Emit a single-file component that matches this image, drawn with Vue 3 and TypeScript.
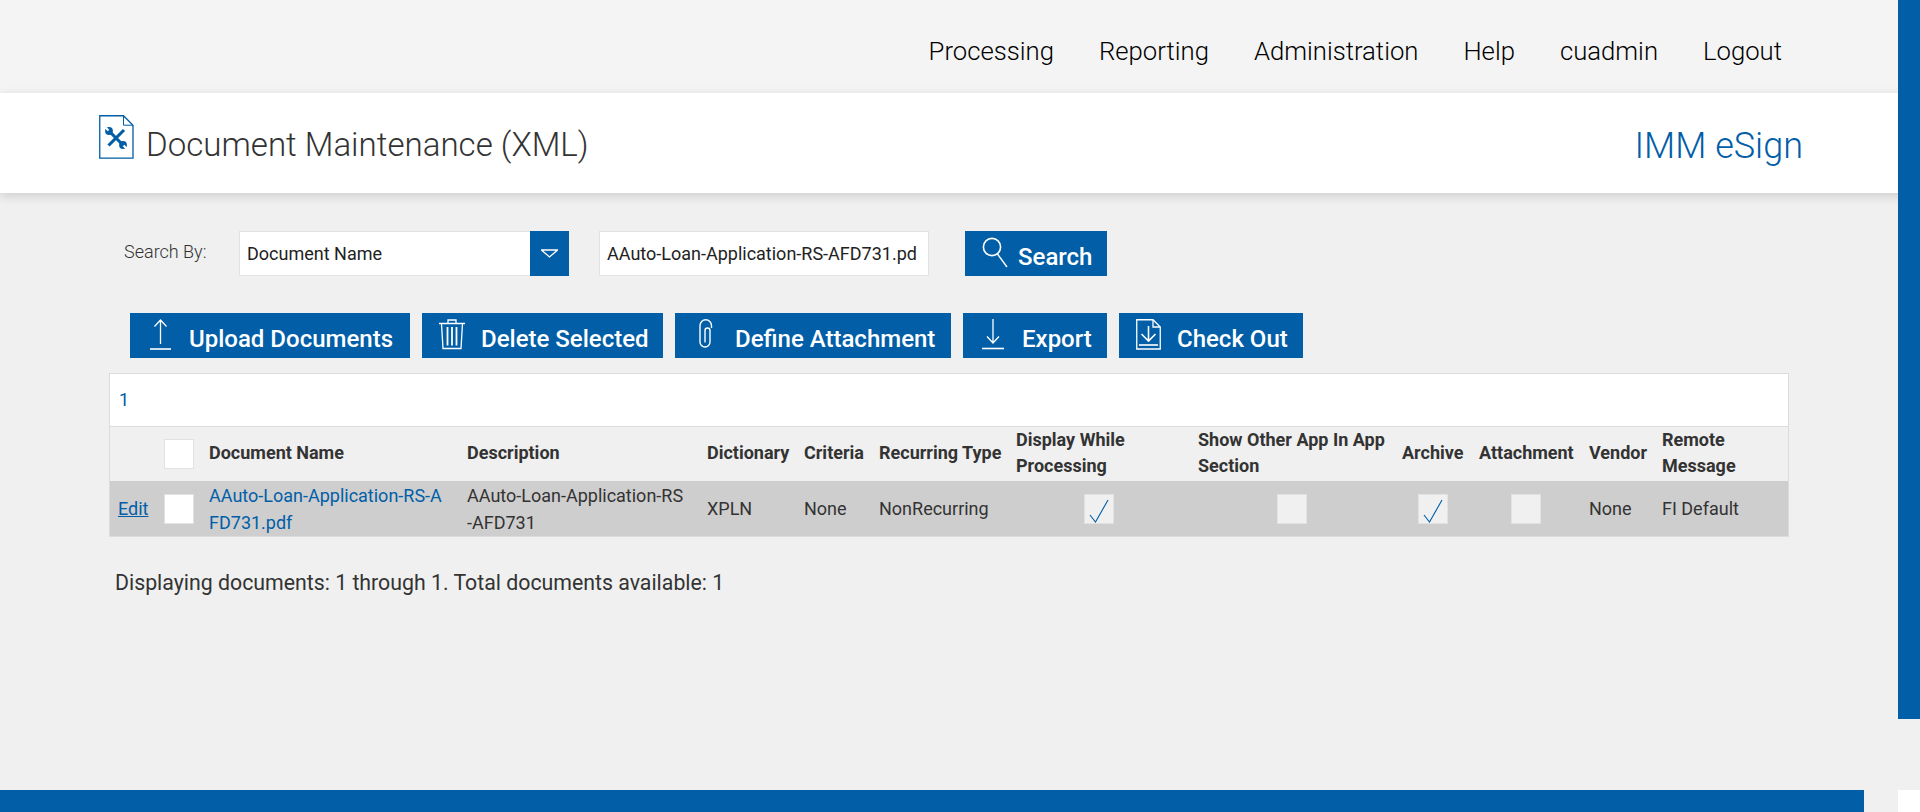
<script setup lang="ts">
interface Col { label: string; width: number }
const navItems: string[] = ['Processing', 'Reporting', 'Administration', 'Help', 'cuadmin', 'Logout']
const columns: Col[] = [
  { label: '', width: 46 },
  { label: '', width: 45 },
  { label: 'Document Name', width: 258 },
  { label: 'Description', width: 240 },
  { label: 'Dictionary', width: 97 },
  { label: 'Criteria', width: 75 },
  { label: 'Recurring Type', width: 137 },
  { label: 'Display While Processing', width: 182 },
  { label: 'Show Other App In App Section', width: 204 },
  { label: 'Archive', width: 77 },
  { label: 'Attachment', width: 110 },
  { label: 'Vendor', width: 73 },
  { label: 'Remote Message', width: 134 }
]
</script>

<template>
  <div class="page">
    <nav class="topnav">
      <a v-for="item in navItems" :key="item" class="navlink">{{ item }}</a>
    </nav>

    <header class="titlebar">
      <svg class="docicon" width="35" height="44" viewBox="0 0 35 44" fill="none">
        <path d="M.75.75H24.5L34 10.2V43.2H.75Z" fill="#fff" stroke="#015ea7" stroke-width="1.300" />
        <path d="M24.5.75V10.2H34" stroke="#015ea7" stroke-width="1" />
        <g stroke="#015ea7" stroke-width="3.100">
          <path d="M25 15 9.500 30.500" />
          <path d="M10 16 24 30" />
        </g>
        <circle cx="10" cy="16" r="3.900" fill="#015ea7" />
        <circle cx="24" cy="30" r="3.900" fill="#015ea7" />
        <path d="M9.500 15.500 6.500 12.500M24.500 30.500 27.500 33.500" stroke="#fff" stroke-width="2.200" />
      </svg>
      <h1 class="title">Document Maintenance (XML)</h1>
      <div class="brand">IMM eSign</div>
    </header>

    <section class="searchrow">
      <label class="searchlabel">Search By:</label>
      <div class="select">
        <span class="selectvalue">Document Name</span>
        <span class="selectbtn">
          <svg width="17" height="9" viewBox="0 0 17 9" fill="none">
            <path d="M.5 1H16.500L8.500 8Z" stroke="#fff" stroke-width="1.300" />
          </svg>
        </span>
      </div>
      <div class="textinput">AAuto-Loan-Application-RS-AFD731.pd</div>
      <button class="btn btn-search">
        <svg class="ic" width="26" height="31" viewBox="0 0 26 31" fill="none" stroke="#fff">
          <circle cx="10" cy="10" r="8.600" stroke-width="1.600" />
          <path d="M15.500 17 25 30" stroke-width="1.400" />
        </svg>
        <span class="btnlabel">Search</span>
      </button>
    </section>

    <section class="actions">
      <button class="btn btn-upload">
        <svg class="ic" width="21" height="31" viewBox="0 0 21 31" fill="none" stroke="#fff" stroke-width="1.300">
          <path d="M10.500 1V25M4.500 7.500 10.500 1l6 6.500" />
          <path d="M0 30H21" stroke-width="1.600" />
        </svg>
        <span class="btnlabel">Upload Documents</span>
      </button>
      <button class="btn btn-delete">
        <svg class="ic" width="26" height="31" viewBox="0 0 26 31" fill="none" stroke="#fff" stroke-width="1.300">
          <path d="M0 4.500H26M9 4V1H17V4" />
          <path d="M2.500 4.500 4 29.500H22L23.500 4.500" />
          <path d="M8.500 8V26.500M13 8V26.500M17.500 8V26.500" stroke-width="1.800" />
        </svg>
        <span class="btnlabel">Delete Selected</span>
      </button>
      <button class="btn btn-define">
        <svg class="ic" width="14" height="30" viewBox="0 0 14 30" fill="none" stroke="#fff" stroke-width="1.400">
          <path d="M12.500 9V6.500A5.750 5.750 0 0 0 1 6.500V23A5 5 0 0 0 11 23V11.500A2.500 2.500 0 0 0 6 11.500V23.500" />
        </svg>
        <span class="btnlabel">Define Attachment</span>
      </button>
      <button class="btn btn-export">
        <svg class="ic" width="22" height="31" viewBox="0 0 22 31" fill="none" stroke="#fff" stroke-width="1.300">
          <path d="M11 0V24M5 17.500 11 24l6-6.500" />
          <path d="M0 29.500H22" stroke-width="1.600" />
        </svg>
        <span class="btnlabel">Export</span>
      </button>
      <button class="btn btn-checkout">
        <svg class="ic" width="25" height="31" viewBox="0 0 25 31" fill="none" stroke="#fff" stroke-width="1.300">
          <path d="M.75.75H17L24.250 8V30H.75Z" />
          <path d="M17 .75V8H24.250" />
          <path d="M12.500 7V21.500M5.500 15 12.500 22 19.500 15" stroke-width="1.600" />
          <path d="M3 26H22" stroke-width="1.600" />
        </svg>
        <span class="btnlabel">Check Out</span>
      </button>
    </section>

    <section class="gridwrap">
      <div class="pager">1</div>
      <table class="grid">
        <colgroup>
          <col v-for="(c, i) in columns" :key="i" :style="{ width: c.width + 'px' }" />
        </colgroup>
        <thead>
          <tr class="headrow">
            <th v-for="(c, i) in columns" :key="i">
              <span v-if="i === 1" class="box box-white"></span>
              <template v-else>{{ c.label }}</template>
            </th>
          </tr>
        </thead>
        <tbody>
          <tr class="datarow">
            <td><a class="editlink">Edit</a></td>
            <td><span class="box box-white"></span></td>
            <td class="brk"><a class="doclink">AAuto-Loan-Application-RS-AFD731.pdf</a></td>
            <td class="brk desc">AAuto-Loan-Application-RS-AFD731</td>
            <td>XPLN</td>
            <td>None</td>
            <td>NonRecurring</td>
            <td class="ctr">
              <span class="box box-grey">
                <svg width="20" height="24" viewBox="0 0 20 24" fill="none"><path d="M1 16 6.500 23 19 1" stroke="#015ea7" stroke-width="1.100" /></svg>
              </span>
            </td>
            <td class="ctr"><span class="box box-grey"></span></td>
            <td class="ctr">
              <span class="box box-grey">
                <svg width="20" height="24" viewBox="0 0 20 24" fill="none"><path d="M1 16 6.500 23 19 1" stroke="#015ea7" stroke-width="1.100" /></svg>
              </span>
            </td>
            <td class="ctr"><span class="box box-grey"></span></td>
            <td>None</td>
            <td>FI Default</td>
          </tr>
        </tbody>
      </table>
    </section>

    <p class="summary">Displaying documents: 1 through 1. Total documents available: 1</p>

    <footer class="footer"></footer>

    <div class="scrollthumb"></div>
    <div class="scrollcorner"></div>
  </div>
</template>

<style>
html, body { margin: 0; background: #f0f0f0; overflow: hidden; }
</style>

<style scoped>
.page {
  position: relative;
  height: 812px;
  overflow: hidden;
  display: flex;
  flex-direction: column;
  background: #f0f0f0;
  font-family: Roboto, "Liberation Sans", sans-serif;
  color: #333;
}
.topnav {
  height: 93px;
  flex: none;
  box-sizing: border-box;
  background: #f4f4f4;
  display: flex;
  justify-content: flex-end;
  align-items: center;
  gap: 45px;
  padding-right: 138px;
}
.navlink { font-size: 25.7px; font-weight: 300; color: #000; line-height: 28px; margin-top: 8px; }
.titlebar {
  height: 100px;
  flex: none;
  box-sizing: border-box;
  background: #fff;
  box-shadow: 0 3px 10px rgba(0, 0, 0, .15);
  display: flex;
  align-items: flex-start;
  padding: 22px 117px 0 99px;
  position: relative;
}
.docicon { flex: none; }
.title { margin: 10px 0 0 12px; font-size: 33.100px; font-weight: 300; line-height: 40px; color: #333; }
.brand { margin: 9px 0 0 auto; font-size: 36px; font-weight: 300; line-height: 44px; color: #015ea7; }
.searchrow {
  display: flex;
  align-items: flex-start;
  margin-top: 38px;
  padding-left: 124px;
  height: 45px;
  flex: none;
}
.searchlabel { width: 115px; font-size: 18px; font-weight: 300; line-height: 42px; color: #333; }
.select {
  width: 330px;
  height: 45px;
  box-sizing: border-box;
  display: flex;
  background: #fff;
  border: 1px solid #e2e2e2;
  border-right: 0;
  margin-right: 30px;
}
.selectvalue { flex: 1; padding-left: 7px; font-size: 18px; line-height: 43px; color: #222; }
.selectbtn {
  width: 39px;
  margin: -1px 0;
  background: #015ea7;
  display: flex;
  align-items: center;
  justify-content: center;
}
.textinput {
  width: 330px;
  height: 45px;
  box-sizing: border-box;
  background: #fff;
  border: 1px solid #e2e2e2;
  padding: 0 7px;
  margin-right: 36px;
  font-size: 18px;
  line-height: 43px;
  color: #222;
  overflow: hidden;
  white-space: nowrap;
}
.actions {
  display: flex;
  gap: 12px;
  margin-top: 37px;
  padding-left: 130px;
  flex: none;
}
.btn {
  height: 45px;
  box-sizing: border-box;
  border: 0;
  margin: 0;
  padding: 0;
  background: #015ea7;
  color: #fff;
  display: flex;
  align-items: flex-start;
  font-family: inherit;
  font-size: 24px;
  font-weight: 500;
}
.ic { flex: none; margin-top: 6px; }
.btnlabel { line-height: 28px; margin-top: 12px; white-space: nowrap; }
.btn-search { width: 142px; padding-left: 17px; }
.btn-search .btnlabel { margin-left: 10px; }
.btn-upload { width: 280px; padding-left: 20px; }
.btn-upload .btnlabel { margin-left: 18px; }
.btn-delete { width: 241px; padding-left: 17px; }
.btn-delete .btnlabel { margin-left: 16px; }
.btn-define { width: 276px; padding-left: 24px; }
.btn-define .btnlabel { margin-left: 22px; }
.btn-export { width: 144px; padding-left: 19px; }
.btn-export .btnlabel { margin-left: 18px; }
.btn-checkout { width: 184px; padding-left: 17px; }
.btn-checkout .btnlabel { margin-left: 16px; }
.gridwrap {
  margin: 15px 0 0 109px;
  width: 1680px;
  box-sizing: border-box;
  border: 1px solid #dcdcdc;
  flex: none;
}
.pager {
  height: 53px;
  box-sizing: border-box;
  background: #fff;
  border-bottom: 1px solid #dcdcdc;
  padding-left: 9px;
  line-height: 52px;
  font-size: 18px;
  color: #015ea7;
}
.grid {
  width: 100%;
  table-layout: fixed;
  border-collapse: collapse;
  font-size: 18px;
}
.grid th, .grid td { padding: 0 8px; line-height: 27px; text-align: left; vertical-align: middle; }
.grid th { font-weight: 700; color: #333; padding: 0 2px 0 8px; }
.grid th:nth-child(n+3) { padding-bottom: 2px; line-height: 26px; }
.grid td.desc { padding-right: 11px; }
.headrow { height: 54px; }
.datarow { height: 55px; background: #cecece; }
.ctr { text-align: center !important; }
.brk { word-break: break-all; }
.box {
  display: flex;
  width: 30px;
  height: 30px;
  box-sizing: border-box;
  align-items: flex-end;
  justify-content: center;
  border: 1px solid #e2e2e2;
}
.ctr .box { display: inline-flex; vertical-align: middle; }
.box-white { background: #fff; }
.box-grey { background: #f0f0f0; }
.editlink { color: #015ea7; text-decoration: underline; }
.doclink { color: #015ea7; }
.summary {
  margin: 33px 0 0 115px;
  font-size: 21.300px;
  line-height: 26px;
  color: #333;
  flex: none;
}
.footer {
  margin-top: auto;
  height: 22px;
  width: 1864px;
  flex: none;
  background: #015ea7;
}
.scrollthumb {
  position: absolute;
  top: 0;
  right: 0;
  width: 22px;
  height: 719px;
  background: #015ea7;
}
.scrollcorner {
  position: absolute;
  bottom: 0;
  right: 0;
  width: 22px;
  height: 22px;
  background: #fff;
}
</style>
